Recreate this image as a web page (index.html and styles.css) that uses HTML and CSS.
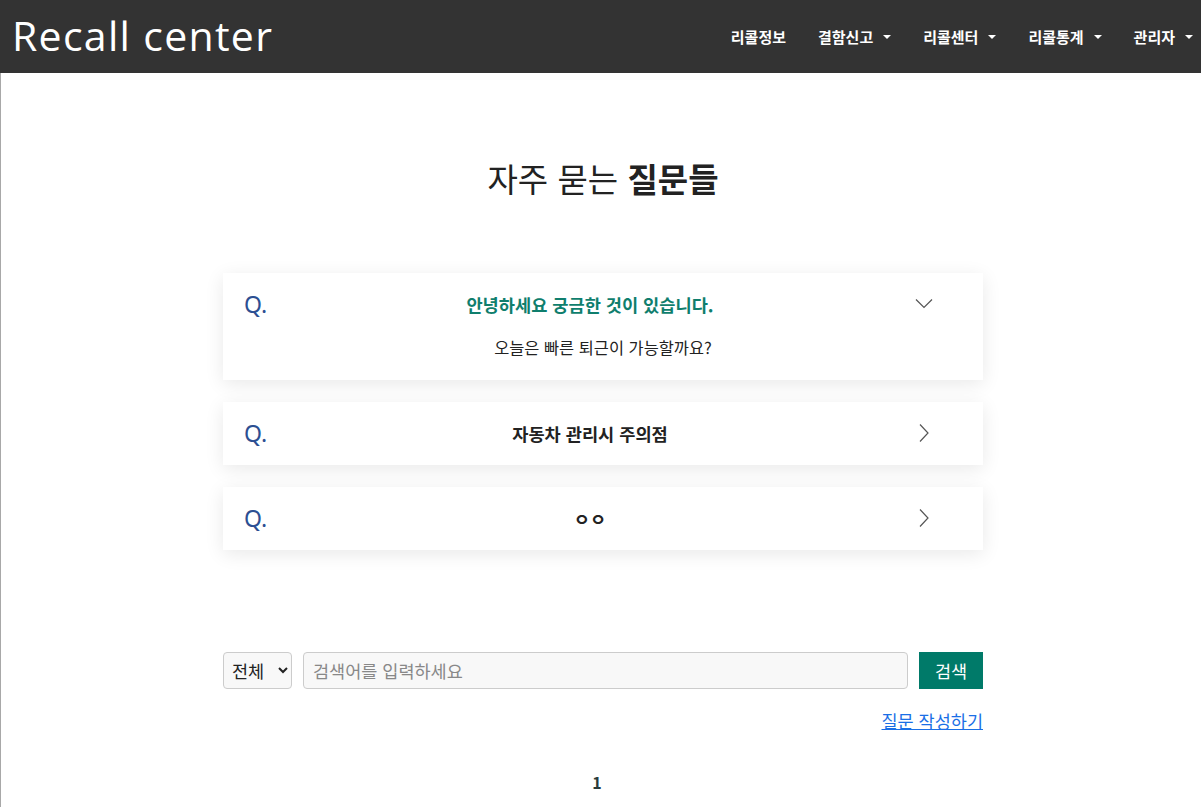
FILE: index.html
```html
<!DOCTYPE html>
<html lang="ko">
<head>
<meta charset="utf-8">
<title>Recall center - 자주 묻는 질문들</title>
<link rel="stylesheet" href="styles.css">
</head>
<body>
<header class="topbar">
  <a class="logo" href="#">Recall center</a>
  <nav class="nav">
    <a class="nav-item" href="#">리콜정보</a>
    <a class="nav-item dropdown" href="#">결함신고<span class="caret"></span></a>
    <a class="nav-item dropdown" href="#">리콜센터<span class="caret"></span></a>
    <a class="nav-item dropdown" href="#">리콜통계<span class="caret"></span></a>
    <a class="nav-item dropdown" href="#">관리자<span class="caret"></span></a>
  </nav>
</header>
<main class="main">
  <h1 class="title">자주 묻는 <strong>질문들</strong></h1>
  <section class="faq">
    <div class="card open">
      <div class="card-head">
        <span class="q">Q.</span>
        <span class="card-title active">안녕하세요 궁금한 것이 있습니다.</span>
        <svg class="chev" width="18" height="12" viewBox="0 0 18 12"><path d="M1 1.5 L9 9.5 L17 1.5" fill="none" stroke="#555" stroke-width="1.2"/></svg>
      </div>
      <div class="card-body">오늘은 빠른 퇴근이 가능할까요?</div>
    </div>
    <div class="card">
      <div class="card-head">
        <span class="q">Q.</span>
        <span class="card-title">자동차 관리시 주의점</span>
        <svg class="chev" width="18" height="20" viewBox="0 0 18 20"><path d="M5 1.5 L13 10 L5 18.5" fill="none" stroke="#555" stroke-width="1.2"/></svg>
      </div>
    </div>
    <div class="card">
      <div class="card-head">
        <span class="q">Q.</span>
        <span class="card-title">ㅇㅇ</span>
        <svg class="chev" width="18" height="20" viewBox="0 0 18 20"><path d="M5 1.5 L13 10 L5 18.5" fill="none" stroke="#555" stroke-width="1.2"/></svg>
      </div>
    </div>
  </section>
  <form class="search">
    <select class="sel"><option>전체</option></select>
    <input class="inp" type="text" placeholder="검색어를 입력하세요">
    <button class="btn" type="button">검색</button>
  </form>
  <div class="write"><a href="#">질문 작성하기</a></div>
  <div class="pager"><span class="page">1</span></div>
</main>
</body>
</html>
```
FILE: styles.css
```css
* { box-sizing: border-box; }
html, body { margin: 0; padding: 0; }
body {
  font-family: "Noto Sans CJK KR", "Noto Sans", sans-serif;
  color: #222;
  background: #fff;
}
.topbar {
  height: 73px;
  background: #333;
  display: flex;
  align-items: center;
  justify-content: space-between;
  padding: 0 0 0 12px;
}
.logo {
  font-family: "Open Sans", "Noto Sans", sans-serif;
  font-size: 41px;
  font-weight: 500;
  color: #fff;
  text-decoration: none;
  letter-spacing: 1.3px;
  line-height: 1;
  margin-top: -2px;
}
.nav { display: flex; align-items: center; height: 100%; }
.nav-item {
  color: #fff;
  text-decoration: none;
  font-size: 15px;
  font-weight: 700;
  padding: 0 16px;
  display: flex;
  align-items: center;
}
.nav-item:last-child { padding-right: 8px; }
.caret {
  display: inline-block;
  width: 0; height: 0;
  margin-left: 10px;
  border-left: 4px solid transparent;
  border-right: 4px solid transparent;
  border-top: 4px solid #fff;
}
.main {
  border-left: 1px solid #a8a8a8;
  min-height: 734px;
  display: flex;
  flex-direction: column;
  align-items: center;
  padding-top: 82px;
  padding-left: 4px;
}
.title {
  margin: 0;
  font-size: 33px;
  font-weight: 400;
  line-height: 46px;
  color: #222;
}
.title strong { font-weight: 700; }
.faq {
  width: 760px;
  margin-top: 72px;
  display: flex;
  flex-direction: column;
  gap: 22px;
}
.card {
  background: #fff;
  box-shadow: 0 4px 18px rgba(0,0,0,0.09);
  padding: 19px 0 20px;
}
.card-head {
  display: flex;
  align-items: center;
  height: 24px;
  padding: 0 50px 0 21px;
}
.q {
  font-family: "Noto Sans", sans-serif;
  font-size: 23px;
  color: #2c4f92;
  width: 40px;
  line-height: 24px;
}
.card-title {
  flex: 1;
  text-align: center;
  font-size: 17.6px;
  font-weight: 700;
  color: #222;
  padding-right: 19px;
}
.card-title.active { color: #0f7e6d; }
.chev { flex: none; }
.card-body {
  text-align: center;
  font-size: 16.4px;
  margin-top: 20px;
  line-height: 23px;
  color: #222;
}
.open { padding-bottom: 21px; }
.search {
  width: 760px;
  margin-top: 102px;
  display: flex;
  gap: 11px;
  height: 37px;
}
.sel {
  width: 69px;
  height: 37px;
  border: 1px solid #ccc;
  border-radius: 4px;
  background: #f8f8f8;
  font-family: "Noto Sans CJK KR", sans-serif;
  font-size: 17.5px;
  color: #222;
  padding: 0 4px;
}
.inp {
  flex: 1;
  height: 37px;
  border: 1px solid #ccc;
  border-radius: 4px;
  background: #f8f8f8;
  font-family: "Noto Sans CJK KR", sans-serif;
  font-size: 17.5px;
  padding: 0 9px;
}
.inp::placeholder { color: #888; }
.btn {
  width: 64px;
  height: 37px;
  border: 0;
  background: #007a69;
  color: #fff;
  font-family: "Noto Sans CJK KR", sans-serif;
  font-size: 17.5px;
}
.write {
  width: 760px;
  text-align: right;
  margin-top: 20px;
  line-height: 24px;
}
.write a {
  color: #1a6fe6;
  font-size: 17.5px;
  text-decoration: underline;
}
.pager {
  margin-top: 37px;
  text-align: center;
  padding-right: 12px;
}
.page {
  font-size: 16px;
  font-weight: 700;
  color: #2a3b3b;
}
```
